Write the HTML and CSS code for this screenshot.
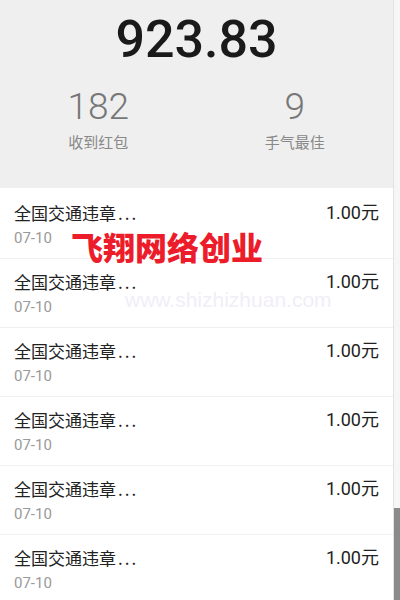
FILE: index.html
```html
<!DOCTYPE html>
<html lang="zh-CN">
<head>
  <meta charset="UTF-8" />
  <meta name="viewport" content="width=device-width, initial-scale=1.0" />
  <title>红包记录</title>
  <link rel="stylesheet" href="styles.css">
</head>
<body>
  <div class="page">
    <main class="content">
      <header class="summary">
        <div class="total">923.83</div>
        <div class="stats">
          <div class="stat">
            <div class="stat-num">182</div>
            <div class="stat-label">收到红包</div>
          </div>
          <div class="stat">
            <div class="stat-num">9</div>
            <div class="stat-label">手气最佳</div>
          </div>
        </div>
      </header>
      <ul class="records">
        <li class="record">
          <div class="record-info">
            <div class="record-title">全国交通违章<span class="dots">...</span></div>
            <div class="record-date">07-10</div>
          </div>
          <div class="record-amount">1.00元</div>
        </li>
        <li class="record">
          <div class="record-info">
            <div class="record-title">全国交通违章<span class="dots">...</span></div>
            <div class="record-date">07-10</div>
          </div>
          <div class="record-amount">1.00元</div>
        </li>
        <li class="record">
          <div class="record-info">
            <div class="record-title">全国交通违章<span class="dots">...</span></div>
            <div class="record-date">07-10</div>
          </div>
          <div class="record-amount">1.00元</div>
        </li>
        <li class="record">
          <div class="record-info">
            <div class="record-title">全国交通违章<span class="dots">...</span></div>
            <div class="record-date">07-10</div>
          </div>
          <div class="record-amount">1.00元</div>
        </li>
        <li class="record">
          <div class="record-info">
            <div class="record-title">全国交通违章<span class="dots">...</span></div>
            <div class="record-date">07-10</div>
          </div>
          <div class="record-amount">1.00元</div>
        </li>
        <li class="record">
          <div class="record-info">
            <div class="record-title">全国交通违章<span class="dots">...</span></div>
            <div class="record-date">07-10</div>
          </div>
          <div class="record-amount">1.00元</div>
        </li>
      </ul>
      <!-- watermarks over the list -->
      <div class="mark-red">飞翔网络创业</div>
      <div class="mark-url">www.shizhizhuan.com</div>
    </main>
    <aside class="edge">
      <div class="edge-top"></div>
      <div class="edge-bottom"></div>
    </aside>
  </div>
</body>
</html>
```

FILE: styles.css
```css
body {
  margin: 0;
  background-color: #fff;
  font-family: 'Noto Sans CJK SC', 'Noto Sans', sans-serif;
  overflow: hidden;
}
.page {
  display: flex;
  width: 400px;
  height: 600px;
}
.content {
  position: relative;
  flex: 1;
  overflow: hidden;
}
.summary {
  background-color: #efefef;
  height: 188px;
  box-sizing: border-box;
  padding-top: 9px;
  text-align: center;
}
.total {
  font-family: 'Roboto', sans-serif;
  font-weight: 500;
  font-size: 52px;
  line-height: 62px;
  color: #1a1a1a;
}
.stats {
  display: grid;
  grid-template-columns: 1fr 1fr;
  margin-top: 15px;
}
.stat-num {
  font-family: 'Roboto', sans-serif;
  font-weight: 300;
  font-size: 37px;
  line-height: 42px;
  color: #777;
}
.stat-label {
  font-size: 15px;
  line-height: 20px;
  margin-top: 4px;
  color: #888;
}
.records {
  list-style: none;
  margin: 0;
  padding: 2px 0 0;
}
.record {
  display: flex;
  justify-content: space-between;
  height: 69px;
  box-sizing: border-box;
  padding: 13px 14px 0;
  border-bottom: 1px solid #f0f0f0;
}
.record-title {
  font-size: 17px;
  line-height: 20px;
  color: #222;
}
.dots {
  letter-spacing: 2px;
  margin-left: 2px;
}
.record-date {
  font-family: 'Roboto', sans-serif;
  font-size: 15px;
  line-height: 20px;
  margin-top: 5px;
  color: #999;
}
.record-amount {
  font-family: 'Roboto', 'Noto Sans CJK SC', sans-serif;
  font-size: 18px;
  line-height: 20px;
  color: #222;
}
.mark-red {
  position: absolute;
  left: 71px;
  top: 226px;
  font-size: 32px;
  font-weight: 900;
  line-height: 40px;
  color: #ec1c2b;
  text-shadow: 0 0 2px #fff;
}
.mark-url {
  position: absolute;
  left: 125px;
  top: 293px;
  font-family: 'Liberation Sans', sans-serif;
  font-size: 21px;
  line-height: 14px;
  color: #f1eef7;
}
.edge {
  display: flex;
  flex-direction: column;
  width: 6px;
  border-left: 1px solid #e2e2e2;
  background-color: #f6f6f6;
}
.edge-top {
  flex: 1;
}
.edge-bottom {
  height: 92px;
  background-color: #8a8a8a;
}
```
